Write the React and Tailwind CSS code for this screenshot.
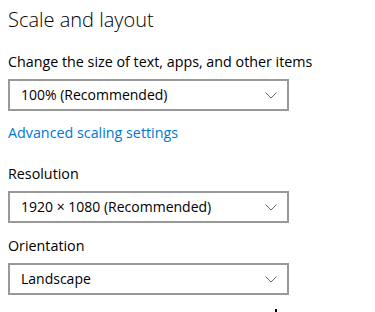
function Chevron() {
  return (
    <svg width="12" height="7" viewBox="0 0 12 7" className="shrink-0">
      <path d="M0.5 0.5 L6 6 L11.5 0.5" fill="none" stroke="#6b6b6b" strokeWidth="1" />
    </svg>
  )
}

function Select({ value }) {
  return (
    <div className="flex h-[32px] w-[281px] items-center justify-between border-2 border-[#999999] bg-white pl-[11px] pr-[10px]">
      <span className="text-[14px] leading-5 text-black">{value}</span>
      <Chevron />
    </div>
  )
}

export default function App() {
  return (
    <div
      className="relative h-[312px] w-[375px] overflow-hidden bg-white px-2 pt-[6px]"
      style={{ fontFamily: '"Open Sans", "Noto Sans", sans-serif' }}
    >
      <h1 className="text-[20px] font-light leading-7 text-black">Scale and layout</h1>

      <p className="mt-[18px] text-[14.3px] leading-5 text-black">
        Change the size of text, apps, and other items
      </p>
      <div className="mt-[7px]">
        <Select value="100% (Recommended)" />
      </div>

      <a className="mt-[12px] block text-[14.3px] leading-5 text-[#0078d7]">Advanced scaling settings</a>

      <p className="mt-[21px] text-[14.3px] leading-5 text-black">Resolution</p>
      <div className="mt-[7px]">
        <Select value="1920 × 1080 (Recommended)" />
      </div>

      <p className="mt-[13px] text-[14.3px] leading-5 text-black">Orientation</p>
      <div className="mt-[7px]">
        <Select value="Landscape" />
      </div>

      {/* mouse pointer tip */}
      <div className="absolute left-[275px] top-[309px] h-[3px] w-[2px] bg-black" />
    </div>
  )
}
